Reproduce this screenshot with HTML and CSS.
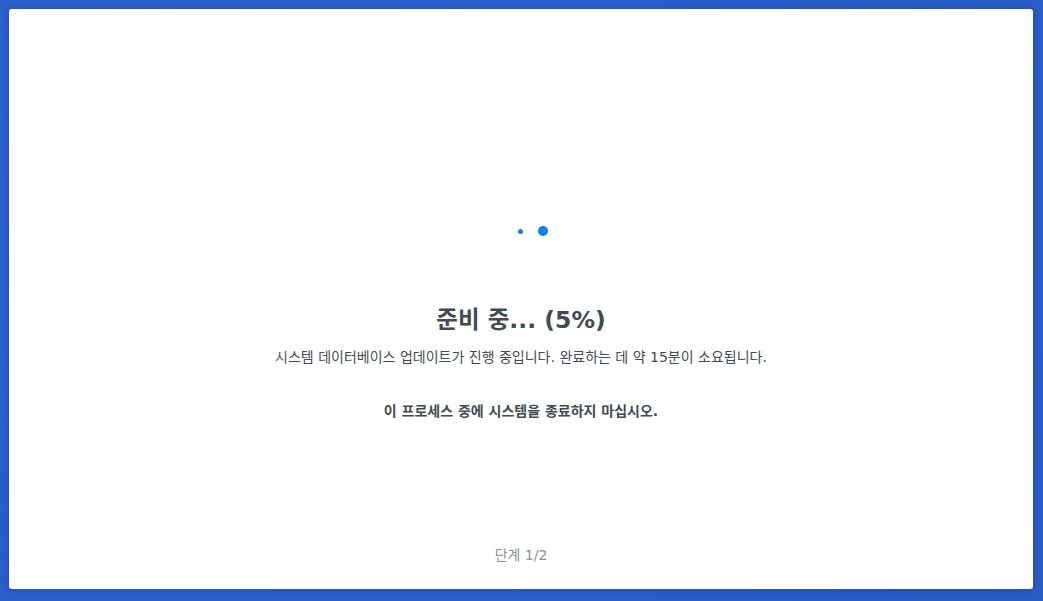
FILE: index.html
```html
<!DOCTYPE html>
<html lang="ko">
<head>
<meta charset="utf-8">
<link rel="stylesheet" href="styles.css">
</head>
<body>
<div class="card">
  <div class="dots">
    <span class="dot small"></span>
    <span class="dot big"></span>
  </div>
  <h1 class="title">준비 중... (5%)</h1>
  <p class="desc">시스템 데이터베이스 업데이트가 진행 중입니다. 완료하는 데 약 15분이 소요됩니다.</p>
  <p class="warn">이 프로세스 중에 시스템을 종료하지 마십시오.</p>
  <p class="step">단계 1/2</p>
</div>
</body>
</html>
```
FILE: styles.css
```css
html, body {
  margin: 0;
  height: 100%;
}
body {
  background: linear-gradient(135deg, #2b61d0 0%, #2a5cc6 100%);
  padding: 9px 10px 12px 9px;
  box-sizing: border-box;
  font-family: "DejaVu Sans", "Noto Sans CJK KR", sans-serif;
  color: #414b55;
}
.card {
  background: #fff;
  border-radius: 3px;
  height: 580px;
  box-sizing: border-box;
  padding: 217px 0 24px;
  display: flex;
  flex-direction: column;
  align-items: center;
  box-shadow: 0 0 6px rgba(10, 30, 90, 0.35);
}
.dots {
  height: 10px;
  display: flex;
  align-items: center;
  gap: 15px;
  padding-left: 24px;
}
.dot {
  display: block;
  border-radius: 50%;
  background: #0a82ee;
}
.dot.small { width: 5px; height: 5px; }
.dot.big { width: 10px; height: 10px; }
.title {
  margin: 69px 0 0;
  font-size: 23.5px;
  line-height: 30px;
  font-weight: bold;
}
.desc {
  margin: 12px 0 0;
  font-size: 14px;
  line-height: 20px;
}
.warn {
  margin: 34px 0 0;
  font-size: 14px;
  line-height: 20px;
  font-weight: bold;
}
.step {
  margin: auto 0 0;
  font-size: 14px;
  line-height: 20px;
  color: #8a939c;
}
```
